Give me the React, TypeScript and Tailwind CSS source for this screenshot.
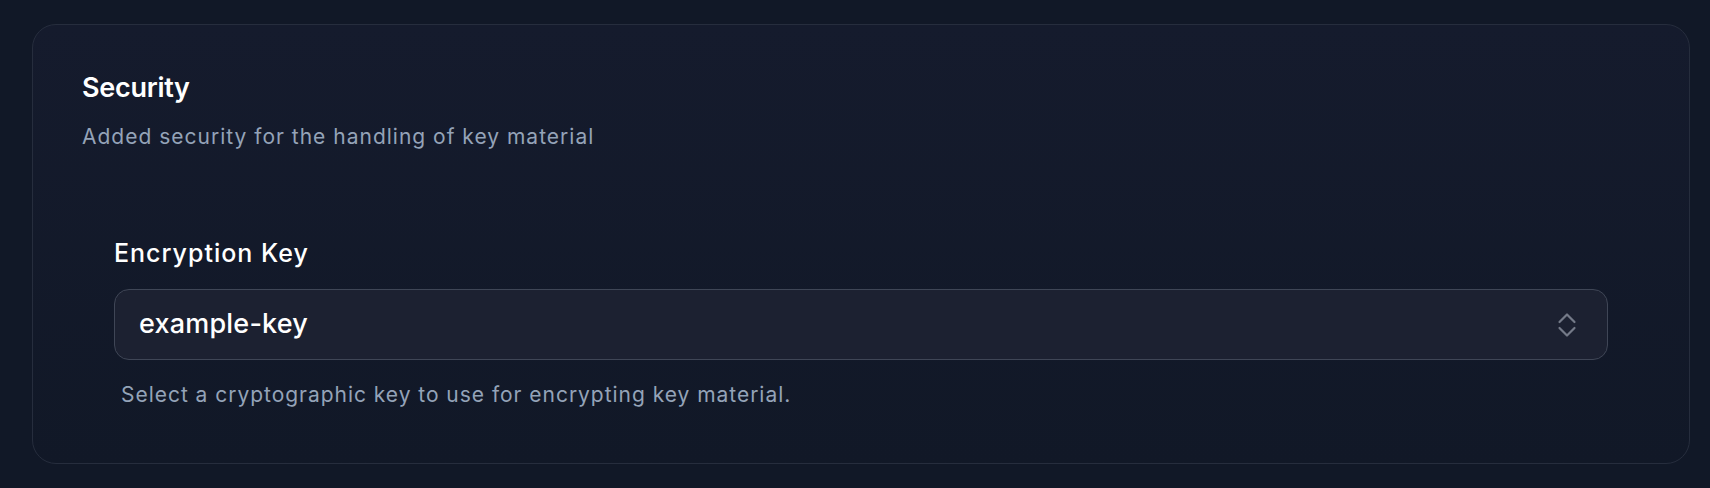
import React from "react";

function ChevronsUpDown() {
  return (
    <svg width="24" height="32" viewBox="0 0 24 32" fill="none" stroke="currentColor" strokeWidth="2.2" strokeLinecap="round" strokeLinejoin="round">
      <path d="M4.5 13 L12 5.5 L19.5 13" />
      <path d="M4.5 19 L12 26.5 L19.5 19" />
    </svg>
  );
}

export default function App() {
  return (
    <div className="min-h-[488px] w-full bg-[#111827] pt-6 pl-8 pr-5 font-['Inter',_'Liberation_Sans',_sans-serif]">
      <section className="rounded-3xl border border-[#262d3d] bg-gradient-to-b from-[#151b2d] to-[#111827] px-[49px] pt-[43px] pb-[53px]">
        <h2 className="text-[27px] leading-[40px] font-semibold text-white tracking-[-0.01em]">Security</h2>
        <p className="mt-[13px] text-[21px] leading-[31px] tracking-[1px] text-[#94a3b8]">
          Added security for the handling of key material
        </p>

        <div className="mt-[83px] px-8">
          <label className="block text-[25px] leading-[36px] font-medium tracking-[1px] text-white">Encryption Key</label>
          <button
            type="button"
            className="mt-[18px] flex h-[71px] w-full items-center justify-between rounded-[15px] border border-[#3f4656] bg-[#1c2131] pl-[24px] pr-[28px] text-left"
          >
            <span className="text-[27px] font-medium tracking-[0.2px] text-white">example-key</span>
            <span className="text-[#747a88]">
              <ChevronsUpDown />
            </span>
          </button>
          <p className="mt-[19px] pl-[7px] text-[21px] leading-[31px] tracking-[0.97px] text-[#94a3b8]">
            Select a cryptographic key to use for encrypting key material.
          </p>
        </div>
      </section>
    </div>
  );
}
